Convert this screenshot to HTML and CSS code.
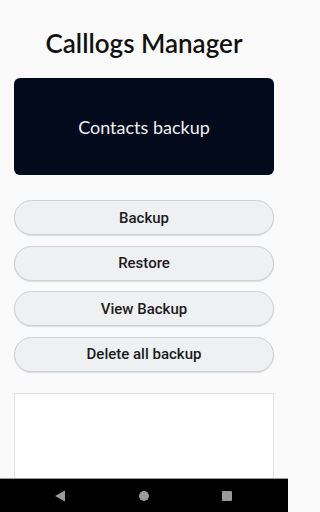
FILE: index.html
```html
<!DOCTYPE html>
<html>
<head>
<meta charset="utf-8">
<link rel="stylesheet" href="styles.css">
</head>
<body>
<div class="screen">
  <main class="app">
    <h1 class="title">Calllogs Manager</h1>
    <div class="hero"><span>Contacts backup</span></div>
    <div class="actions">
      <button class="btn">Backup</button>
      <button class="btn">Restore</button>
      <button class="btn">View Backup</button>
      <button class="btn">Delete all backup</button>
    </div>
    <div class="output"></div>
  </main>
  <nav class="navbar">
    <svg class="nav-icon" width="12" height="12" viewBox="0 0 12 12"><polygon points="11,0.5 11,11.5 1,6" fill="#9a9a9a"/></svg>
    <svg class="nav-icon" width="12" height="12" viewBox="0 0 12 12"><circle cx="6" cy="6" r="5" fill="#9a9a9a"/></svg>
    <svg class="nav-icon" width="12" height="12" viewBox="0 0 12 12"><rect x="1" y="1" width="10" height="10" rx="1" fill="#9a9a9a"/></svg>
  </nav>
</div>
</body>
</html>
```

FILE: styles.css
```css
html, body {
  margin: 0;
  padding: 0;
  background: #fafafa;
}
body {
  width: 288px;
  height: 512px;
  overflow: hidden;
  font-family: Lato, "Noto Sans", sans-serif;
}
.screen {
  display: flex;
  flex-direction: column;
  height: 512px;
}
.app {
  flex: 1;
  min-height: 0;
  display: flex;
  flex-direction: column;
  padding: 28px 14px 0;
  overflow: hidden;
}
.title {
  margin: 0;
  height: 30px;
  line-height: 30px;
  text-align: center;
  font-family: Lato, sans-serif;
  font-weight: 600;
  font-size: 26px;
  color: #111;
}
.hero {
  margin-top: 20px;
  height: 97px;
  border-radius: 6px;
  background: #030a1c;
  display: flex;
  align-items: center;
  justify-content: center;
  color: #f0f0f0;
  font-family: Lato, sans-serif;
  font-size: 18px;
}
.actions {
  margin-top: 25px;
  display: flex;
  flex-direction: column;
  gap: 10.67px;
}
.btn {
  height: 35px;
  border-radius: 18px;
  border: 1px solid #cdd1d5;
  background: #eef0f2;
  box-shadow: 0 1px 1px rgba(0,0,0,0.12);
  font-family: Roboto, "Liberation Sans", sans-serif;
  font-weight: 500;
  font-size: 15px;
  color: #1c1c1c;
  padding: 0;
}
.output {
  margin-top: 21px;
  flex: 1;
  background: #ffffff;
  border: 1px solid #e2e2e2;
  border-bottom: none;
}
.navbar {
  height: 33px;
  background: #000;
  border-top: 1px solid #9a9a9a;
  display: flex;
  align-items: center;
  justify-content: space-between;
  padding: 0 55px 0 54px;
}
.nav-icon {
  display: block;
}
```
